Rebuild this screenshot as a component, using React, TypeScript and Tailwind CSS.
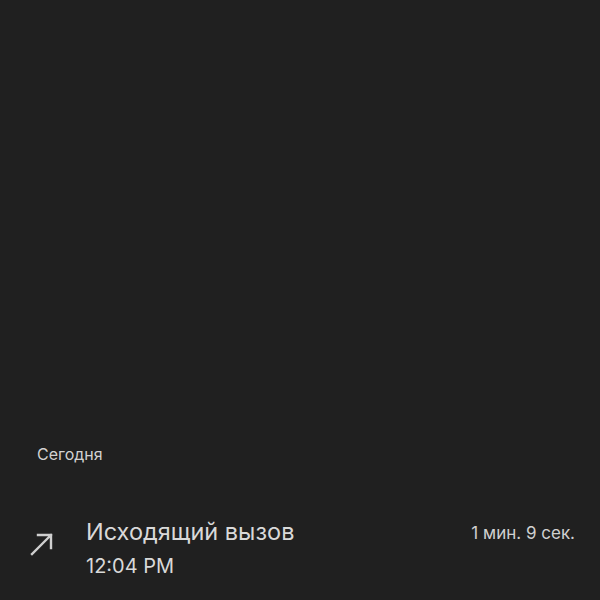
import React from "react";

function OutgoingArrow() {
  return (
    <svg width="26" height="26" viewBox="0 0 26 26" fill="none" className="text-[#cfcfcf]">
      <path d="M3 23 L22 4 M9 4 H22 V17" stroke="currentColor" strokeWidth="2.4" strokeLinecap="square" />
    </svg>
  );
}

export default function App() {
  return (
    <div
      className="flex h-[600px] w-[600px] flex-col bg-[#202020]"
      style={{ fontFamily: "Inter, 'Noto Sans', sans-serif" }}
    >
      <div className="flex-1" />
      <div className="px-[37px] pb-[55px] text-[16px] leading-none text-[#d2d2d2]">Сегодня</div>
      <div className="flex items-start pb-[20px] pl-[29px] pr-[25px]">
        <div className="mt-[14px] w-[57px]">
          <OutgoingArrow />
        </div>
        <div className="flex flex-1 flex-col">
          <div className="text-[23.5px] leading-[30px] text-[#d9d9d9]">Исходящий вызов</div>
          <div className="mt-[5px] text-[20px] leading-[28px] text-[#d9d9d9]">12:04 PM</div>
        </div>
        <div className="mt-[4px] text-[17px] leading-[24px] text-[#d0d0d0]">1 мин. 9 сек.</div>
      </div>
    </div>
  );
}
